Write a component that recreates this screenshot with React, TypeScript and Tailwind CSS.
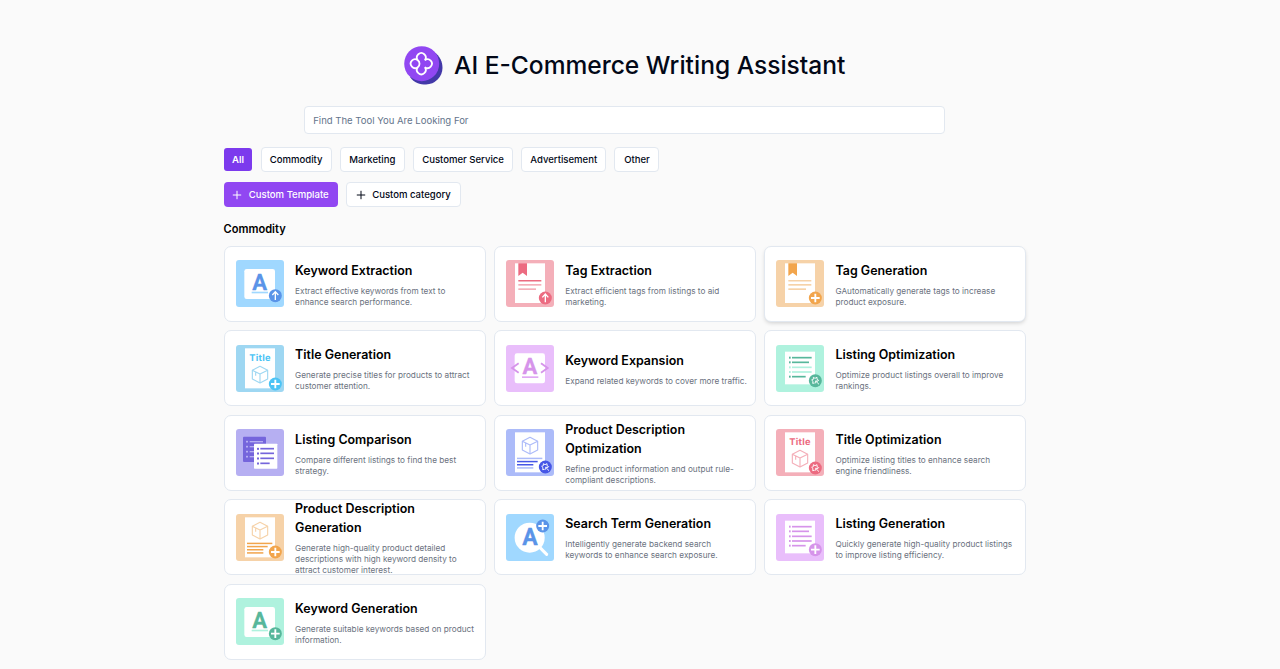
import React from "react";

type Palette = { bg: string; main: string; soft: string };

const P: Record<string, Palette> = {
  blue: { bg: "#a0d8ff", main: "#5a94e8", soft: "#a0d8ff" },
  sky: { bg: "#9ed7f2", main: "#4cc4f5", soft: "#9ed7f2" },
  pink: { bg: "#f4afb9", main: "#ec6b81", soft: "#f4afb9" },
  orange: { bg: "#f6d2a8", main: "#f2a54c", soft: "#f6d2a8" },
  lilac: { bg: "#e9befb", main: "#d694ea", soft: "#e0a8f3" },
  mint: { bg: "#aff2de", main: "#57b79b", soft: "#aff2de" },
  violet: { bg: "#b6aff2", main: "#7565dc", soft: "#b6aff2" },
  indigo: { bg: "#acbbf9", main: "#4656e6", soft: "#acbbf9" },
};

type BadgeKind = "up" | "plus" | "tune";

function Badge({ kind, color, x = 118, y = 114 }: { kind: BadgeKind; color: string; x?: number; y?: number }) {
  return (
    <g transform={`translate(${x} ${y})`} fill="none" stroke="#fff">
      <circle r="19.5" fill={color} stroke="none" />
      {kind === "up" && <path d="M0 13V-11M-9-2L0-12L9-2" strokeWidth="4" />}
      {kind === "plus" && <path d="M0-13V13M-13 0H13" strokeWidth="5.5" />}
      {kind === "tune" && (
        <>
          <path d="M-2 7L-8 8L-7 2L-11-2L-6-4L-6-10L-1-7L5-10L5-4L10-1L7 2" strokeWidth="2.8" strokeLinejoin="round" />
          <path d="M1 1L11 11M1 8V1H8" strokeWidth="2.8" />
        </>
      )}
    </g>
  );
}

function Letter({ x, y, size = 66, color }: { x: number; y: number; size?: number; color: string }) {
  return (
    <text
      x={x}
      y={y}
      fontSize={size}
      fill={color}
      stroke={color}
      strokeWidth="0.8"
      strokeLinejoin="round"
      textAnchor="middle"
      fontFamily="Roboto, sans-serif"
      fontWeight="700"
    >
      A
    </text>
  );
}

function Box({ y, color }: { y: number; color: string }) {
  return (
    <g transform={`translate(72 ${y})`} fill="none" stroke={color} strokeWidth="3.4" strokeLinejoin="round">
      <path d="M0-25L23-13V13L0 25L-23 13V-13Z" />
      <path d="M-23-13L0-2L23-13M0-2V25M-13-8V3" />
    </g>
  );
}

function List({ c, alt }: { c: string; alt: string }) {
  const rows = [[38, 59, c], [52, 51, c], [67, 59, alt], [81, 59, alt], [95, 41, c]] as const;
  return (
    <>
      {rows.map(([y, w, color]) => (
        <g key={y} fill={color}>
          <rect x="39" y={y - 3} width="5" height="6" />
          <rect x="48" y={y - 2.5} width={w} height="5" />
        </g>
      ))}
    </>
  );
}

function Keyword({ p, kind }: { p: Palette; kind: BadgeKind }) {
  return (
    <>
      <rect x="25" y="27" width="92" height="90" rx="7" fill="#fff" />
      <Letter x={71} y={90} color={p.main} />
      <rect x="47" y="95" width="49" height="5" fill={p.soft} />
      <Badge kind={kind} color={p.main} y={107} />
    </>
  );
}

function Tag({ p, kind }: { p: Palette; kind: BadgeKind }) {
  return (
    <>
      <rect x="27" y="10" width="90" height="119" fill="#fff" />
      <path d="M37 10H63V48L50 38L37 48Z" fill={p.main} />
      <rect x="37" y="60" width="69" height="4.5" fill={kind === "up" ? p.main : p.soft} />
      <rect x="37" y="72" width="69" height="5" fill={p.soft} />
      <rect x="37" y="85" width="53" height="5" fill={p.soft} />
      <Badge kind={kind} color={p.main} />
    </>
  );
}

function Title({ p, kind, y = 117 }: { p: Palette; kind: BadgeKind; y?: number }) {
  return (
    <>
      <rect x="27" y="10" width="90" height="120" fill="#fff" />
      <text x={72} y={48} fontSize="28" letterSpacing="0.8" fill={p.main} textAnchor="middle" textRendering="geometricPrecision" fontFamily="Inter, sans-serif" fontWeight="700">
        Title
      </text>
      <Box y={89} color={p.soft} />
      <Badge kind={kind} color={p.main} y={y} />
    </>
  );
}

function Description({ p, kind }: { p: Palette; kind: BadgeKind }) {
  const first = kind === "plus" ? p.main : p.soft;
  return (
    <>
      <rect x="27" y="10" width="90" height="120" fill="#fff" />
      <Box y={50} color={p.soft} />
      <rect x="33" y="86" width="76" height="4.5" fill={first} />
      <rect x="33" y="95.5" width="62" height="4.5" fill={p.main} />
      <rect x="33" y="105" width="49" height="4.5" fill={p.main} />
      <rect x="33" y="114.5" width="49" height="4.5" fill={first} />
      <Badge kind={kind} color={p.main} y={114} />
    </>
  );
}

function Expansion() {
  return (
    <>
      <rect x="26" y="25" width="91" height="90" rx="7" fill="#fff" />
      <Letter x={72} y={88} color={P.lilac.main} />
      <rect x="48" y="94" width="49" height="5" fill={P.lilac.soft} />
      <path d="M38 55L18 69L38 83M105 55L125 69L105 83" fill="none" stroke={P.lilac.main} strokeWidth="5.5" />
    </>
  );
}

function Comparison() {
  const rows = [59, 73, 88, 103];
  return (
    <>
      <rect x="21" y="23" width="69" height="76" rx="3" fill="#7565dc" />
      {[38, 53, 68, 83].map((y) => (
        <g key={y} fill="#b6aff2">
          <rect x="30" y={y - 2.5} width="6" height="5" />
          <rect x="41" y={y - 2} width={40} height="4" />
        </g>
      ))}
      <rect x="54" y="44" width="70" height="75" rx="2" fill="#fff" />
      {rows.map((y, i) => (
        <g key={y} fill="#7565dc">
          <rect x="63" y={y - 2.5} width="6" height="6" />
          <rect x="73" y={y - 2.5} width={i === 3 ? 28 : 41} height="5" />
        </g>
      ))}
    </>
  );
}

function SearchTerm() {
  return (
    <>
      <path d="M102 101L122 121" stroke="#fff" strokeWidth="9" strokeLinecap="round" />
      <circle cx="71" cy="71" r="45" fill="#fff" />
      <Letter x={72} y={94} size={69} color={P.blue.main} />
      <Badge kind="plus" color={P.blue.main} x={110} y={36} />
    </>
  );
}

function Listing({ p, kind }: { p: Palette; kind: BadgeKind }) {
  return (
    <>
      <rect x="27" y="20" width="90" height="98" fill="#fff" />
      <List c={p.main} alt={kind === "tune" ? p.soft : p.main} />
      <Badge kind={kind} color={p.main} y={107} />
    </>
  );
}

const cards: { title: string; text: string; bg: string; art: React.ReactNode; raised?: boolean }[] = [
  { title: "Keyword Extraction", text: "Extract effective keywords from text to enhance search performance.", bg: P.blue.bg, art: <Keyword p={P.blue} kind="up" /> },
  { title: "Tag Extraction", text: "Extract efficient tags from listings to aid marketing.", bg: P.pink.bg, art: <Tag p={P.pink} kind="up" /> },
  { title: "Tag Generation", text: "GAutomatically generate tags to increase product exposure.", bg: P.orange.bg, art: <Tag p={P.orange} kind="plus" />, raised: true },
  { title: "Title Generation", text: "Generate precise titles for products to attract customer attention.", bg: P.sky.bg, art: <Title p={P.sky} kind="plus" /> },
  { title: "Keyword Expansion", text: "Expand related keywords to cover more traffic.", bg: P.lilac.bg, art: <Expansion /> },
  { title: "Listing Optimization", text: "Optimize product listings overall to improve rankings.", bg: P.mint.bg, art: <Listing p={P.mint} kind="tune" /> },
  { title: "Listing Comparison", text: "Compare different listings to find the best strategy.", bg: P.violet.bg, art: <Comparison /> },
  { title: "Product Description Optimization", text: "Refine product information and output rule-compliant descriptions.", bg: P.indigo.bg, art: <Description p={P.indigo} kind="tune" /> },
  { title: "Title Optimization", text: "Optimize listing titles to enhance search engine friendliness.", bg: P.pink.bg, art: <Title p={P.pink} kind="tune" /> },
  { title: "Product Description Generation", text: "Generate high-quality product detailed descriptions with high keyword density to attract customer interest.", bg: P.orange.bg, art: <Description p={P.orange} kind="plus" /> },
  { title: "Search Term Generation", text: "Intelligently generate backend search keywords to enhance search exposure.", bg: P.blue.bg, art: <SearchTerm /> },
  { title: "Listing Generation", text: "Quickly generate high-quality product listings to improve listing efficiency.", bg: P.lilac.bg, art: <Listing p={P.lilac} kind="plus" /> },
  { title: "Keyword Generation", text: "Generate suitable keywords based on product information.", bg: P.mint.bg, art: <Keyword p={P.mint} kind="plus" /> },
];

const filters = [
  { name: "Commodity", width: "w-[71px]" },
  { name: "Marketing", width: "w-[65px]" },
  { name: "Customer Service", width: "w-[100px]" },
  { name: "Advertisement", width: "w-[85px]" },
  { name: "Other", width: "w-[45px]" },
];

function Plus() {
  return (
    <svg viewBox="0 0 10 10" className="size-[10px] shrink-0" fill="none" stroke="currentColor" strokeWidth="1">
      <path d="M5 .8V9.2M.8 5H9.2" />
    </svg>
  );
}

function Logo() {
  return (
    <svg viewBox="0 0 39 39" className="h-[39px] w-[39px] shrink-0">
      <path d="M6 31C10 37 16 38.5 22 38.5A16.8 16.8 0 0 0 38.5 22C38.5 16 36 10 30 6Z" fill="#4338a8" />
      <circle cx="17.7" cy="17.7" r="17.5" fill="#9147f2" />
      <path
        d="M13.8 14.2A4.4 4.4 0 1 1 20.8 14.2A4.4 4.4 0 1 1 20.8 21.2A4.4 4.4 0 1 1 13.8 21.2A4.4 4.4 0 1 1 13.8 14.2A4.4 4.4 0 0 1 13.8 21.2"
        fill="none"
        stroke="#fff"
        strokeWidth="1.8"
      />
    </svg>
  );
}

export default function App() {
  return (
    <div className="h-[669px] overflow-hidden bg-[#fafafa] font-['Inter',sans-serif] text-[#020817]">
      <div className="w-[1249.4px] pt-[45.5px]">
        <header className="flex h-[39px] items-center justify-center gap-[11px]">
          <Logo />
          <h1 className="text-[24.55px] leading-[38px] font-medium whitespace-nowrap">AI E-Commerce Writing Assistant</h1>
        </header>
        <input
          className="mx-auto mt-[21.5px] block h-[28px] w-[641px] rounded-[4px] border border-[#e2e8f0] bg-white px-[8px] text-[9.55px] outline-none placeholder:text-[#64748b]"
          placeholder="Find The Tool You Are Looking For"
        />
        <main className="mx-auto w-[802.4px]">
          <div className="mt-[13px] flex items-center gap-[8.2px] pl-[0.5px] text-[9.55px] font-medium">
            <button className="mr-[0.5px] h-[23px] w-[28px] rounded-[3px] bg-[#7c3aed] pt-[1px] font-semibold text-white">All</button>
            {filters.map((f) => (
              <button key={f.name} className={`${f.width} h-[25px] rounded-[4px] border border-[#e2e8f0] bg-white pt-[1px] whitespace-nowrap`}>
                {f.name}
              </button>
            ))}
          </div>
          <div className="mt-[10px] flex gap-[8.5px] text-[9.55px] font-medium">
            <button className="flex h-[25px] w-[114px] items-center justify-center gap-[6.5px] rounded-[4px] bg-[#9147f2] pt-[1px] whitespace-nowrap text-white">
              <Plus />
              Custom Template
            </button>
            <button className="flex h-[25px] w-[114.5px] items-center justify-center gap-[6.5px] rounded-[4px] border border-[#e2e8f0] bg-white pt-[1px] whitespace-nowrap">
              <Plus />
              Custom category
            </button>
          </div>
          <h2 className="mt-[14px] text-[11.1px] leading-[17px] font-semibold text-black">Commodity</h2>
          <section className="mt-[7.7px] grid grid-cols-3 gap-x-[8.2px] gap-y-[8.4px]">
            {cards.map((card) => (
              <article
                key={card.title}
                className={`flex h-[76.1px] items-center rounded-[7px] border border-[#e2e8f0] bg-white pl-[11px] ${
                  card.raised ? "shadow-[0_2px_4px_-1px_rgb(0_0_0/0.18)]" : ""
                }`}
              >
                <svg viewBox="0 0 144 141" className="h-[47px] w-[48px] shrink-0">
                  <rect width="144" height="141" rx="9" fill={card.bg} />
                  {card.art}
                </svg>
                <div className="ml-[11.6px] w-[182.8px] pt-[1.2px]">
                  <h3 className="w-[150px] text-[12.45px] leading-[19px] font-semibold text-black">{card.title}</h3>
                  <p className="mt-[5.9px] text-[8.22px] leading-[11px] text-[#6b7280]">{card.text}</p>
                </div>
              </article>
            ))}
          </section>
        </main>
      </div>
    </div>
  );
}
